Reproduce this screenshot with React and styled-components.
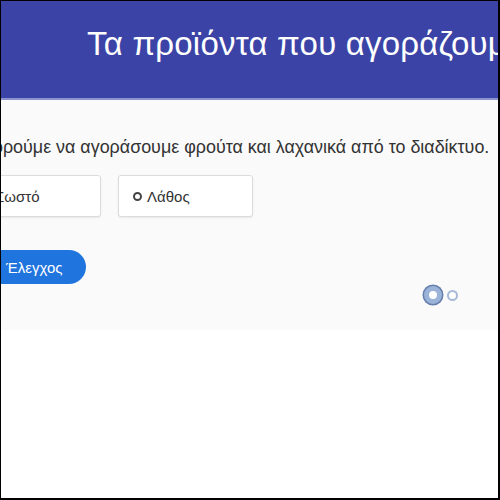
import React from "react";
import styled, { createGlobalStyle } from "styled-components";

const Global = createGlobalStyle`
  html, body { margin: 0; padding: 0; background: #fff; overflow: hidden; }
  * { box-sizing: border-box; }
`;

const Frame = styled.div`
  width: 500px;
  height: 500px;
  border-style: solid;
  border-color: #000;
  border-width: 1px 2px 2px 1px;
  background: #fff;
  overflow: hidden;
  font-family: "Liberation Sans", "DejaVu Sans", sans-serif;
`;

const Header = styled.header`
  height: 99px;
  background: #3b44a6;
  border-bottom: 2px solid #8d93cf;
  display: flex;
  align-items: center;
  padding-left: 86px;
  padding-bottom: 12px;
  white-space: nowrap;
  overflow: hidden;
`;

const Title = styled.h1`
  margin: 0;
  color: #fff;
  font-size: 33px;
  font-weight: 400;
  letter-spacing: 0.2px;
`;

const Main = styled.main`
  background: #fafafa;
  height: 230px;
  padding-top: 36px;
  overflow: hidden;
`;

const Content = styled.div`
  margin-left: -35px;
  display: flex;
  flex-direction: column;
  white-space: nowrap;
`;

const Question = styled.p`
  margin: 0;
  font-size: 17.9px;
  color: #333;
  line-height: 22px;
`;

const Options = styled.div`
  display: flex;
  gap: 17px;
  margin-top: 17px;
`;

const Option = styled.label`
  width: 135px;
  height: 42px;
  display: flex;
  align-items: center;
  gap: 5px;
  padding-left: 14px;
  background: #fff;
  border: 1px solid #dcdcdc;
  border-radius: 3px;
  box-shadow: 0 1px 2px rgba(0, 0, 0, 0.08);
  font-size: 15px;
  color: #333;
`;

const Radio = styled.span`
  width: 9px;
  height: 9px;
  border: 2px solid #444;
  border-radius: 50%;
`;

const CheckButton = styled.button`
  margin-top: 33px;
  margin-left: 2px;
  align-self: flex-start;
  height: 34px;
  width: 118px;
  border: none;
  border-radius: 17px;
  background: #1f74de;
  color: #fff;
  font-family: inherit;
  font-size: 15px;
  text-align: left;
  padding-left: 38px;
`;

const Pager = styled.div`
  display: flex;
  justify-content: flex-end;
  align-items: center;
  gap: 5px;
  padding-right: 40px;
  margin-top: 2px;
`;

const Dot = styled.span`
  display: block;
  width: ${(p) => (p.$active ? 18 : 11)}px;
  height: ${(p) => (p.$active ? 18 : 11)}px;
  border-radius: 50%;
  background: #fff;
  border: ${(p) => (p.$active ? "5px solid #9bb3d8" : "2px solid #a7b9d6")};
  box-shadow: ${(p) => (p.$active ? "0 0 0 1.5px #6680ad" : "none")};
`;

export default function App() {
  return (
    <>
      <Global />
      <Frame>
        <Header>
          <Title>Τα προϊόντα που αγοράζουμε στο διαδίκτυο</Title>
        </Header>
        <Main>
          <Content>
            <Question>Μπορούμε να αγοράσουμε φρούτα και λαχανικά από το διαδίκτυο.</Question>
            <Options>
              <Option><Radio />Σωστό</Option>
              <Option><Radio />Λάθος</Option>
            </Options>
            <CheckButton>Έλεγχος</CheckButton>
          </Content>
          <Pager>
            <Dot $active />
            <Dot />
          </Pager>
        </Main>
      </Frame>
    </>
  );
}
